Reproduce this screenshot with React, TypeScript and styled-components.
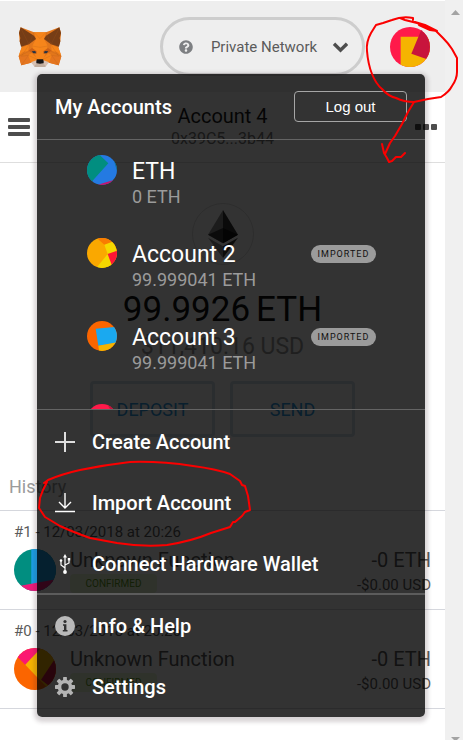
import React from "react";
import styled, { createGlobalStyle } from "styled-components";
import { FaQuestionCircle } from "react-icons/fa";

const GlobalStyle = createGlobalStyle`
  *, *::before, *::after { box-sizing: border-box; }
  body {
    margin: 0;
    background: #fff;
    font-family: Roboto, "Liberation Sans", sans-serif;
  }
  button { font: inherit; color: inherit; background: none; border: 0; padding: 0; cursor: pointer; }
  svg { display: block; flex: none; }
  h1, h2, p, ul { margin: 0; padding: 0; font-weight: 400; }
  ul { list-style: none; }
`;

const Shell = styled.div`
  position: relative;
  display: flex;
  min-height: 100vh;
  overflow: hidden;
`;

const Page = styled.div`
  position: relative;
  flex: 1;
  min-width: 0;
`;

const ScrollTrack = styled.div`
  width: 18px;
  display: flex;
  flex-direction: column;
  justify-content: space-between;
  align-items: center;
  padding: 10px 0 0 3px;
  background: #f0f0f0;
`;

const TopBar = styled.header`
  display: flex;
  align-items: center;
  gap: 25px;
  height: 92px;
  padding: 0 15px 0 18px;
  border-top: 1px solid #fff;
  background: #eee;
`;

const NetworkButton = styled.button`
  display: flex;
  align-items: center;
  width: 205px;
  height: 59px;
  margin-left: auto;
  padding: 0 14px 0 16px;
  border: 3px solid #cdcdcd;
  border-radius: 30px;
  color: #5b5b5b;
  font-size: 15px;
`;

const NetworkName = styled.span`
  flex: 1;
  text-align: center;
  margin-left: 3px;
`;

const IconButton = styled.button`
  display: flex;
  color: #4d4d4d;
`;

const AccountBar = styled.section`
  display: grid;
  grid-template-columns: 22px 1fr 22px;
  align-items: center;
  height: 71px;
  padding: 0 8px;
  border-bottom: 1px solid #dedede;
`;

const AccountTitle = styled.div`
  text-align: center;
`;

const AccountName = styled.h1`
  font-size: 20px;
  line-height: 24px;
  color: #1b1b1b;
`;

const Address = styled.p`
  font-size: 16px;
  line-height: 22px;
  color: #777;
`;

const Overview = styled.section`
  display: flex;
  flex-direction: column;
  align-items: center;
  padding: 40px 0 39px;
`;

const TokenLogo = styled.div`
  display: flex;
  align-items: center;
  justify-content: center;
  width: 62px;
  height: 62px;
  border: 1px solid #dedede;
  border-radius: 50%;
`;

const Balance = styled.p`
  display: flex;
  gap: 6px;
  margin-top: 24px;
  font-size: 35px;
  line-height: 42px;
  color: #111;
`;

const Fiat = styled.p`
  font-size: 23px;
  line-height: 32px;
  color: #9b9b9b;
`;

const Actions = styled.div`
  display: flex;
  gap: 15px;
  margin-top: 18px;
`;

const ActionButton = styled.button`
  width: 125px;
  height: 56px;
  border: 3px solid #d2e0ea;
  border-radius: 4px;
  color: #2f9ae0;
  font-size: 18px;
`;

const HistoryTitle = styled.h2`
  padding: 0 9px 12px;
  font-size: 18px;
  line-height: 22px;
  color: #9b9b9b;
`;

const Transaction = styled.li`
  height: 99px;
  padding: 12px 14px 0;
  border-top: 1px solid #d5d7dd;
  &:last-child { height: 100px; border-bottom: 1px solid #d5d7dd; }
`;

const TxDate = styled.p`
  font-size: 15px;
  line-height: 18px;
  color: #5b5b5b;
`;

const TxBody = styled.div`
  display: grid;
  grid-template-columns: 42px 1fr auto;
  column-gap: 14px;
  margin-top: 7px;
`;

const TxLine = styled.p`
  font-size: 20px;
  line-height: 24px;
  color: #5b5b5b;
`;

const TxInfo = styled.div`
  min-width: 0;
`;

const TxAmount = styled(TxInfo)`
  text-align: right;
`;

const TxFiat = styled.p`
  font-size: 15px;
  line-height: 26px;
  color: #5b5b5b;
`;

const Status = styled.span`
  display: flex;
  align-items: center;
  justify-content: center;
  width: 87px;
  height: 19px;
  margin-top: 2px;
  border-radius: 4px;
  background: #eafad7;
  color: #609a1c;
  font-size: 10px;
`;

const TxIcon = styled.div`
  padding-top: 1px;
`;

const Menu = styled.aside`
  position: absolute;
  top: 74px;
  left: 37px;
  right: 20px;
  border-radius: 5px;
  background: rgba(0, 0, 0, 0.8);
  box-shadow: 0 2px 4px 3px rgba(60, 40, 50, 0.2);
  color: #fff;
`;

const MenuHeader = styled.div`
  display: flex;
  align-items: center;
  justify-content: space-between;
  height: 66px;
  padding: 0 18px;
  border-bottom: 1px solid #646464;
`;

const MenuTitle = styled.h2`
  font-size: 20px;
  font-weight: 500;
  line-height: 24px;
`;

const LogoutButton = styled.button`
  width: 113px;
  height: 31px;
  border: 1px solid #a6a6a6;
  border-radius: 4px;
  font-family: "Liberation Sans", Arial, sans-serif;
  font-size: 15px;
`;

const AccountList = styled.ul`
  height: 270px;
  overflow: hidden;
  border-bottom: 1px solid #646464;
`;

const AccountRow = styled.li`
  height: 83px;
`;

const AccountButton = styled.button`
  display: flex;
  align-items: flex-start;
  gap: 15px;
  width: 100%;
  padding: 15px 49px 0 50px;
  text-align: left;
`;

const AccountText = styled.span`
  display: flex;
  flex: 1;
  flex-direction: column;
  padding-top: 3px;
`;

const AccountLabel = styled.span`
  font-size: 23px;
  line-height: 28px;
`;

const AccountBalance = styled.span`
  font-size: 18px;
  line-height: 22px;
  color: #9b9b9b;
`;

const Badge = styled.span`
  display: flex;
  align-items: center;
  justify-content: center;
  width: 65px;
  height: 18px;
  margin-top: 7px;
  border-radius: 9px;
  background: #9b9b9b;
  color: #111;
  font-size: 9px;
  letter-spacing: 1px;
`;

const MenuItem = styled.button`
  display: flex;
  align-items: center;
  gap: 17px;
  width: 100%;
  height: 61px;
  padding: 2px 18px 0;
  font-size: 20px;
  font-weight: 500;
  text-align: left;
`;

const MenuGroup = styled.nav<{ $ruled?: boolean }>`
  border-top: ${(p) => (p.$ruled ? "2px solid #5c5c5c" : "0")};
  ${MenuItem} {
    padding-top: ${(p) => (p.$ruled ? "0" : "2px")};
  }
`;

const Circling = styled.svg<{ $side: "left" | "right" }>`
  position: absolute;
  top: 0;
  ${(p) => p.$side}: 0;
  pointer-events: none;
  fill: none;
  stroke: #fb0000;
  stroke-width: 2;
  stroke-linejoin: round;
  stroke-linecap: round;
`;

type Shape = [color: string, points: string];

function Identicon({ size, base, shapes, id }: { size: number; base: string; shapes: Shape[]; id: string }) {
  return (
    <svg width={size} height={size} viewBox="0 0 90 90" aria-hidden="true">
      <clipPath id={id}>
        <circle cx="45" cy="45" r="45" />
      </clipPath>
      <g clipPath={`url(#${id})`}>
        <rect width="90" height="90" fill={base} />
        {shapes.map(([color, points]) => (
          <polygon key={points} points={points} fill={color} />
        ))}
      </g>
    </svg>
  );
}

function FoxHalf() {
  return (
    <>
      <polygon fill="#e2761b" points="63,78 103,93 121,93 121,190 94,184 65,192 57,165 66,138 60,120 58,95" />
      <polygon fill="#f6851b" points="103,93 121,93 121,176 112,176 103,152 98,134 109,112" />
      <polygon fill="#763d16" points="63,78 103,103 109,113 88,129 64,136 60,120 62,110 58,95" />
      <polygon fill="#f6851b" points="66,138 88,130 86,148 70,152 57,163" />
      <polygon fill="#cd6116" points="86,148 97,140 111,150 111,157 96,154" />
      <polygon fill="#e4751f" points="57,165 86,162 94,184 65,192" />
      <polygon fill="#f6851b" points="86,162 96,155 111,170 105,187 94,184" />
      <polygon fill="#233447" points="96,150 107,149 109,156 101,156" />
      <polygon fill="#d7c1b3" points="94,183 110,177 121,187 121,197 105,197" />
      <polygon fill="#c0ad9e" points="105,192 112,187 121,187 121,197 105,197" />
      <polygon fill="#161616" points="112,174 121,174 121,187 110,186 110,179" />
      <path
        d="M88 129L103 93L121 112M66 138L109 113M88 130L65 165L86 162M98 134L121 138M57 165L88 150M65 192L86 162L112 174M64 82L88 129"
        fill="none"
        stroke="#a8591a"
        strokeWidth="1"
        opacity="0.6"
      />
    </>
  );
}

function Fox() {
  return (
    <svg width="44" height="42" viewBox="55 74 132 126" role="img" aria-label="MetaMask">
      <FoxHalf />
      <g transform="translate(242 0) scale(-1 1)">
        <FoxHalf />
      </g>
    </svg>
  );
}

function Ether() {
  return (
    <svg width="30" height="48" viewBox="0 0 90 144" aria-hidden="true">
      <polygon fill="#8c8c8c" points="45,0 0,74 45,100" />
      <polygon fill="#343434" points="45,0 90,74 45,100" />
      <polygon fill="#393939" points="0,74 45,54 45,100" />
      <polygon fill="#141414" points="90,74 45,54 45,100" />
      <polygon fill="#8c8c8c" points="0,83 45,109 45,144" />
      <polygon fill="#3c3c3b" points="90,83 45,109 45,144" />
    </svg>
  );
}

const strokeProps = { width: 20, height: 20, viewBox: "0 0 20 20", fill: "none", stroke: "#dedede", strokeWidth: 2, "aria-hidden": true } as const;

const PlusIcon = () => (
  <svg {...strokeProps}>
    <path d="M0 10H20M10 0V20" />
  </svg>
);

const ImportIcon = () => (
  <svg {...strokeProps} strokeWidth={1.4} stroke="#fff">
    <path d="M10 0V15M4 9L10 15L16 9M0 18.5H20" />
  </svg>
);

const UsbIcon = () => (
  <svg {...strokeProps} strokeWidth={1.2} stroke="#fff">
    <path d="M10 3V17M10 14L6 11V7M10 11L14 9V5" />
    <path d="M10 0L12 3.5H8Z" fill="#fff" stroke="none" />
    <circle cx="10" cy="18" r="1.9" fill="#fff" stroke="none" />
    <circle cx="6" cy="6.5" r="1.3" fill="#fff" stroke="none" />
    <rect x="12.8" y="4" width="2.4" height="2.4" fill="#fff" stroke="none" />
  </svg>
);

const InfoIcon = () => (
  <svg width="20" height="20" viewBox="0 0 20 20" aria-hidden="true">
    <circle cx="10" cy="10" r="10" fill="#bababa" />
    <circle cx="10" cy="5.5" r="1.6" fill="#303030" />
    <path d="M8 8.2H11.4V14H12.5V15.5H7.8V14H9V9.7H8Z" fill="#303030" />
  </svg>
);

const GearIcon = () => (
  <svg width="20" height="20" viewBox="-10 -10 20 20" aria-hidden="true" fill="#b4b4b4">
    {[0, 45, 90, 135].map((a) => (
      <rect key={a} x="-1.9" y="-10" width="3.8" height="20" rx="0.6" transform={`rotate(${a})`} />
    ))}
    <circle r="7.3" />
    <circle r="3.7" fill="#333" />
  </svg>
);

const Chevron = () => (
  <svg width="16" height="16" viewBox="0 0 16 16" fill="none" stroke="#4d4d4d" strokeWidth="3.4" aria-hidden="true">
    <path d="M2 4.8L8.5 11.2L15 4.8" />
  </svg>
);

const Bars = () => (
  <svg width="22" height="18" viewBox="0 0 22 18" fill="#4d4d4d" aria-hidden="true">
    <rect width="22" height="4" rx="1" />
    <rect y="7" width="22" height="4" rx="1" />
    <rect y="14" width="22" height="4" rx="1" />
  </svg>
);

const Dots = () => (
  <svg width="22" height="6" viewBox="0 0 22 6" fill="#4d4d4d" aria-hidden="true">
    <rect width="6" height="6" rx="1" />
    <rect x="8" width="6" height="6" rx="1" />
    <rect x="16" width="6" height="6" rx="1" />
  </svg>
);

const accounts: { name?: string; balance?: string; imported?: boolean; base: string; shapes: Shape[] }[] = [
  {
    name: "ETH",
    balance: "0 ETH",
    base: "#247ae2",
    shapes: [
      ["#018e80", "0,0 38,0 64,25 16,78 0,90"],
      ["#0f7189", "76,0 90,0 90,48"],
      ["#c8146c", "30,90 90,72 90,90"],
    ],
  },
  {
    name: "Account 2",
    balance: "99.999041 ETH",
    imported: true,
    base: "#faa800",
    shapes: [
      ["#f97c01", "30,0 90,0 90,40 52,20 36,6"],
      ["#f5d800", "52,20 80,10 90,40 62,48"],
      ["#f5d800", "28,90 62,48 80,90"],
      ["#ff1635", "62,48 90,38 90,80 74,80"],
    ],
  },
  {
    name: "Account 3",
    balance: "99.999041 ETH",
    imported: true,
    base: "#fb6500",
    shapes: [
      ["#1aa9f0", "26,23 90,17 90,66 34,74"],
      ["#f5b400", "34,74 90,64 90,90 36,90"],
    ],
  },
  { base: "#ff1a4a", shapes: [["#c8143c", "60,0 90,0 90,50"]] },
];

const transactions: { date: string; base: string; shapes: Shape[] }[] = [
  {
    date: "#1 - 12/03/2018 at 20:26",
    base: "#018e80",
    shapes: [
      ["#1aa0e8", "37,0 90,0 90,90 37,90"],
      ["#f0197a", "14,90 14,79 90,65 90,90"],
    ],
  },
  {
    date: "#0 - 12/03/2018 at 20:26",
    base: "#fb6500",
    shapes: [
      ["#f5b400", "50,0 90,0 90,90 76,90 24,36"],
      ["#fb1872", "0,0 58,0 24,36 8,20"],
      ["#c8143c", "90,20 90,90 76,82 58,68"],
    ],
  },
];

export default function App() {
  return (
    <Shell>
      <GlobalStyle />
      <Page>
        <TopBar>
          <Fox />
          <NetworkButton>
            <FaQuestionCircle size={14} color="#7d7f82" />
            <NetworkName>Private Network</NetworkName>
            <Chevron />
          </NetworkButton>
          <IconButton aria-label="Accounts">
            <Identicon
              id="current"
              size={40}
              base="#ff1a4a"
              shapes={[
                ["#f5b400", "24,22 90,22 90,90 24,90"],
                ["#c8143c", "73,0 48,60 90,75 90,0"],
              ]}
            />
          </IconButton>
        </TopBar>

        <AccountBar>
          <IconButton aria-label="Open details">
            <Bars />
          </IconButton>
          <AccountTitle>
            <AccountName>Account 4</AccountName>
            <Address>0x39C5...3b44</Address>
          </AccountTitle>
          <IconButton aria-label="More options">
            <Dots />
          </IconButton>
        </AccountBar>

        <Overview>
          <TokenLogo>
            <Ether />
          </TokenLogo>
          <Balance>
            <span>99.9926</span>
            <span>ETH</span>
          </Balance>
          <Fiat>$11,410.16 USD</Fiat>
          <Actions>
            <ActionButton>DEPOSIT</ActionButton>
            <ActionButton>SEND</ActionButton>
          </Actions>
        </Overview>

        <HistoryTitle>History</HistoryTitle>
        <ul>
          {transactions.map((tx, i) => (
            <Transaction key={tx.date}>
              <TxDate>{tx.date}</TxDate>
              <TxBody>
                <TxIcon>
                  <Identicon id={`tx-${i}`} size={42} base={tx.base} shapes={tx.shapes} />
                </TxIcon>
                <TxInfo>
                  <TxLine>Unknown Function</TxLine>
                  <Status>CONFIRMED</Status>
                </TxInfo>
                <TxAmount>
                  <TxLine>-0 ETH</TxLine>
                  <TxFiat>-$0.00 USD</TxFiat>
                </TxAmount>
              </TxBody>
            </Transaction>
          ))}
        </ul>

        <Menu>
          <MenuHeader>
            <MenuTitle>My Accounts</MenuTitle>
            <LogoutButton>Log out</LogoutButton>
          </MenuHeader>
          <AccountList>
            {accounts.map((a, i) => (
              <AccountRow key={i}>
                <AccountButton aria-label={a.name ? undefined : "Account"}>
                  <Identicon id={`account-${i}`} size={30} base={a.base} shapes={a.shapes} />
                  {a.name && (
                    <AccountText>
                      <AccountLabel>{a.name}</AccountLabel>
                      <AccountBalance>{a.balance}</AccountBalance>
                    </AccountText>
                  )}
                  {a.imported && <Badge>IMPORTED</Badge>}
                </AccountButton>
              </AccountRow>
            ))}
          </AccountList>
          <MenuGroup>
            <MenuItem><PlusIcon />Create Account</MenuItem>
            <MenuItem><ImportIcon />Import Account</MenuItem>
            <MenuItem><UsbIcon />Connect Hardware Wallet</MenuItem>
          </MenuGroup>
          <MenuGroup $ruled>
            <MenuItem><InfoIcon />Info &amp; Help</MenuItem>
            <MenuItem><GearIcon />Settings</MenuItem>
          </MenuGroup>
        </Menu>
      </Page>

      <ScrollTrack aria-hidden="true">
        <svg width="9" height="5" viewBox="0 0 9 5"><path d="M4.5 0L9 5H0Z" fill="#a3a3a3" /></svg>
        <svg width="9" height="3" viewBox="0 0 9 3"><path d="M0 0H9L6 3H3Z" fill="#a3a3a3" /></svg>
      </ScrollTrack>

      <Circling $side="right" width="103" height="170" viewBox="360 0 103 170" aria-hidden="true">
        <path d="M413 20L413 18Q402 16 392 20L383 23L376 25L371 33Q366 42 367 51Q368 64 372 74Q376 84 382 89Q388 96 396 98Q404 102 414 102L428 99L441 97Q449 92 452 86Q457 79 457 72L457 58L452 49Q448 43 443 38L436 31L430 28L417 23L405 20L400 18M415 22L425 25L437 31L430 30L419 25" />
        <path d="M414 102L408 112L402 124L395 136L390 143L385 154M382 144L384 153L387 158L389 162L392 161L396 157L401 157L405 153" />
      </Circling>
      <Circling $side="left" width="260" height="560" viewBox="0 0 260 560" aria-hidden="true">
        <path d="M44 483L48 480Q62 474 80 470Q104 465 130 462Q160 461 193 466Q216 469 230 474L240 481L242 485L245 486L248 496L250 510L245 512L242 516L235 522L233 522L230 527L211 533Q192 541 167 545Q142 547 117 543L90 538Q73 532 60 526L45 517L39 508L40 498L43 490L47 482" />
      </Circling>
    </Shell>
  );
}
